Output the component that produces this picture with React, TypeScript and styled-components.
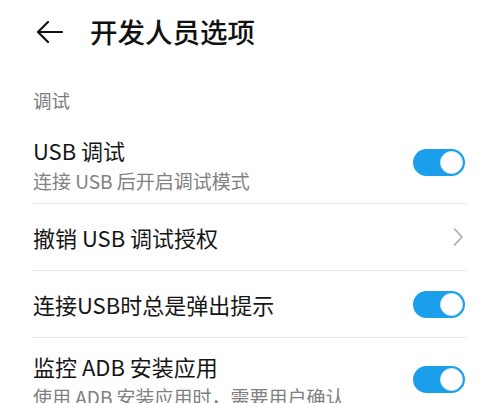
import React from "react";
import styled, { createGlobalStyle } from "styled-components";

const Global = createGlobalStyle`
  html, body { margin: 0; padding: 0; background: #ffffff; }
  body { font-family: "Noto Sans CJK SC", "Noto Sans", sans-serif; -webkit-font-smoothing: antialiased; }
  * { box-sizing: border-box; }
`;

const Page = styled.div`
  width: 500px;
  height: 403px;
  overflow: hidden;
  background: #ffffff;
`;

const TopBar = styled.div`
  height: 63px;
  display: flex;
  align-items: center;
  padding-left: 36px;
  gap: 27px;
`;

const BackBtn = styled.div`
  width: 27px;
  height: 24px;
  display: flex;
  align-items: center;
`;

const Title = styled.h1`
  margin: 0;
  font-size: 27.5px;
  font-weight: 500;
  color: #111111;
  line-height: 1;
`;

const Content = styled.div`
  padding: 0 33px;
  display: flex;
  flex-direction: column;
`;

const SectionLabel = styled.div`
  font-size: 18.5px;
  color: #7a7a7a;
  line-height: 24px;
  padding: 25px 0 10px 0;
`;

const Row = styled.div<{ $tall?: boolean; $last?: boolean }>`
  height: ${(p) => (p.$tall ? 82 : 67)}px;
  display: flex;
  align-items: center;
  justify-content: space-between;
  border-bottom: ${(p) => (p.$last ? "none" : "1px solid #e6e6e6")};
  flex-shrink: 0;
`;

const TextCol = styled.div<{ $tall?: boolean }>`
  display: flex;
  flex-direction: column;
  padding-top: ${(p) => (p.$tall ? 5 : 0)}px;
`;

const ItemTitle = styled.div`
  font-size: 22px;
  color: #151515;
  line-height: 29px;
`;

const ItemSub = styled.div`
  font-size: 19px;
  color: #808080;
  line-height: 28px;
  margin-top: 2px;
`;

const Track = styled.div`
  width: 52px;
  height: 27px;
  border-radius: 14px;
  background: #1b9fea;
  display: flex;
  align-items: center;
  justify-content: flex-end;
  padding-right: 2px;
  margin-right: 2px;
  flex-shrink: 0;
`;

const Knob = styled.div`
  width: 23px;
  height: 23px;
  border-radius: 50%;
  background: #ffffff;
  border: 1px solid #d6e9f5;
`;

const Toggle = () => (
  <Track>
    <Knob />
  </Track>
);

const Chevron = () => (
  <svg width="12" height="20" viewBox="0 0 12 20" style={{ marginRight: 3 }}>
    <path d="M2.5 2 L10 10 L2.5 18" fill="none" stroke="#a8a8a8" strokeWidth="1.6" strokeLinecap="round" strokeLinejoin="round" />
  </svg>
);

export default function App() {
  return (
    <>
      <Global />
      <Page>
        <TopBar>
          <BackBtn>
            <svg width="27" height="24" viewBox="0 0 27 24">
              <path d="M2 12 H26 M12 2 L2 12 L12 22" fill="none" stroke="#111" strokeWidth="2.2" strokeLinecap="round" strokeLinejoin="round" />
            </svg>
          </BackBtn>
          <Title>开发人员选项</Title>
        </TopBar>
        <Content>
          <SectionLabel>调试</SectionLabel>
          <Row $tall>
            <TextCol $tall>
              <ItemTitle>USB 调试</ItemTitle>
              <ItemSub>连接 USB 后开启调试模式</ItemSub>
            </TextCol>
            <Toggle />
          </Row>
          <Row>
            <TextCol>
              <ItemTitle>撤销 USB 调试授权</ItemTitle>
            </TextCol>
            <Chevron />
          </Row>
          <Row>
            <TextCol>
              <ItemTitle>连接USB时总是弹出提示</ItemTitle>
            </TextCol>
            <Toggle />
          </Row>
          <Row $tall $last>
            <TextCol $tall>
              <ItemTitle>监控 ADB 安装应用</ItemTitle>
              <ItemSub>使用 ADB 安装应用时，需要用户确认</ItemSub>
            </TextCol>
            <Toggle />
          </Row>
        </Content>
      </Page>
    </>
  );
}
